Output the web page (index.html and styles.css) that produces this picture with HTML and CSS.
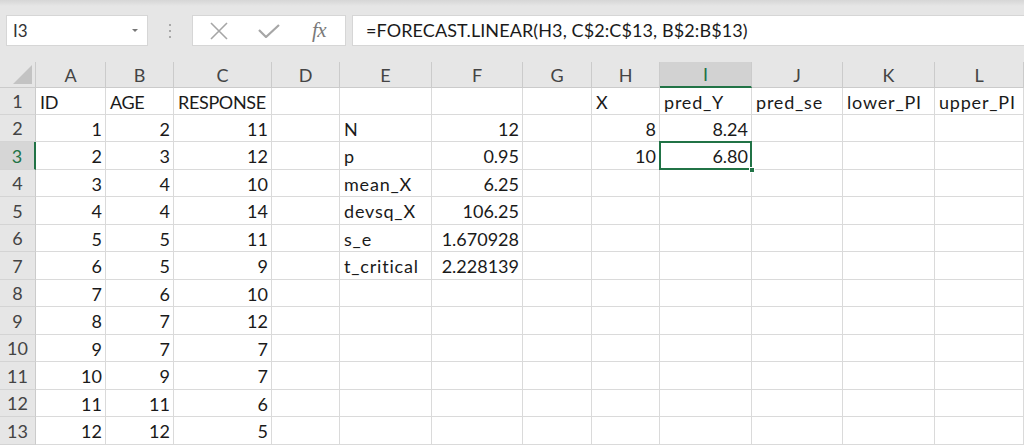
FILE: index.html
```html
<!DOCTYPE html>
<html>
<head>
<meta charset="utf-8">
<link rel="stylesheet" href="styles.css">
</head>
<body>
<div class="app">
  <div class="toolbar">
    <div class="namebox">
      <span class="name">I3</span>
      <span class="caret"></span>
    </div>
    <div class="grip"><i></i><i></i><i></i></div>
    <div class="fxbtns">
      <svg class="ico" width="20" height="18" viewBox="0 0 20 18"><path d="M2 1 L18 17 M18 1 L2 17" stroke="#a6a6a6" stroke-width="1.6" fill="none"/></svg>
      <svg class="ico" width="22" height="14" viewBox="0 0 22 14"><path d="M1 6 L8 13 L21 1" stroke="#a6a6a6" stroke-width="2.2" fill="none"/></svg>
      <span class="fx">fx</span>
    </div>
    <div class="formula">=FORECAST.LINEAR(H3, C$2:C$13, B$2:B$13)</div>
  </div>
  <div class="sheet">
    <div class="corner"><span class="tri"></span></div>
    <div class="ch">A</div><div class="ch">B</div><div class="ch">C</div><div class="ch">D</div><div class="ch">E</div><div class="ch">F</div><div class="ch">G</div><div class="ch">H</div><div class="ch sel">I</div><div class="ch">J</div><div class="ch">K</div><div class="ch">L</div>

    <div class="rh">1</div><div class="c up">ID</div><div class="c up">AGE</div><div class="c up">RESPONSE</div><div class="c"></div><div class="c"></div><div class="c"></div><div class="c"></div><div class="c">X</div><div class="c lo">pred_Y</div><div class="c lo">pred_se</div><div class="c lo">lower_PI</div><div class="c lo">upper_PI</div>

    <div class="rh">2</div><div class="c n">1</div><div class="c n">2</div><div class="c n">11</div><div class="c"></div><div class="c">N</div><div class="c n">12</div><div class="c"></div><div class="c n">8</div><div class="c n">8.24</div><div class="c"></div><div class="c"></div><div class="c"></div>

    <div class="rh sel">3</div><div class="c n">2</div><div class="c n">3</div><div class="c n">12</div><div class="c"></div><div class="c">p</div><div class="c n">0.95</div><div class="c"></div><div class="c n">10</div><div class="c n active">6.80</div><div class="c"></div><div class="c"></div><div class="c"></div>

    <div class="rh">4</div><div class="c n">3</div><div class="c n">4</div><div class="c n">10</div><div class="c"></div><div class="c lo">mean_X</div><div class="c n">6.25</div><div class="c"></div><div class="c"></div><div class="c"></div><div class="c"></div><div class="c"></div><div class="c"></div>

    <div class="rh">5</div><div class="c n">4</div><div class="c n">4</div><div class="c n">14</div><div class="c"></div><div class="c lo">devsq_X</div><div class="c n">106.25</div><div class="c"></div><div class="c"></div><div class="c"></div><div class="c"></div><div class="c"></div><div class="c"></div>

    <div class="rh">6</div><div class="c n">5</div><div class="c n">5</div><div class="c n">11</div><div class="c"></div><div class="c lo">s_e</div><div class="c n">1.670928</div><div class="c"></div><div class="c"></div><div class="c"></div><div class="c"></div><div class="c"></div><div class="c"></div>

    <div class="rh">7</div><div class="c n">6</div><div class="c n">5</div><div class="c n">9</div><div class="c"></div><div class="c lo">t_critical</div><div class="c n">2.228139</div><div class="c"></div><div class="c"></div><div class="c"></div><div class="c"></div><div class="c"></div><div class="c"></div>

    <div class="rh">8</div><div class="c n">7</div><div class="c n">6</div><div class="c n">10</div><div class="c"></div><div class="c"></div><div class="c"></div><div class="c"></div><div class="c"></div><div class="c"></div><div class="c"></div><div class="c"></div><div class="c"></div>

    <div class="rh">9</div><div class="c n">8</div><div class="c n">7</div><div class="c n">12</div><div class="c"></div><div class="c"></div><div class="c"></div><div class="c"></div><div class="c"></div><div class="c"></div><div class="c"></div><div class="c"></div><div class="c"></div>

    <div class="rh">10</div><div class="c n">9</div><div class="c n">7</div><div class="c n">7</div><div class="c"></div><div class="c"></div><div class="c"></div><div class="c"></div><div class="c"></div><div class="c"></div><div class="c"></div><div class="c"></div><div class="c"></div>

    <div class="rh">11</div><div class="c n">10</div><div class="c n">9</div><div class="c n">7</div><div class="c"></div><div class="c"></div><div class="c"></div><div class="c"></div><div class="c"></div><div class="c"></div><div class="c"></div><div class="c"></div><div class="c"></div>

    <div class="rh">12</div><div class="c n">11</div><div class="c n">11</div><div class="c n">6</div><div class="c"></div><div class="c"></div><div class="c"></div><div class="c"></div><div class="c"></div><div class="c"></div><div class="c"></div><div class="c"></div><div class="c"></div>

    <div class="rh">13</div><div class="c n">12</div><div class="c n">12</div><div class="c n">5</div><div class="c"></div><div class="c"></div><div class="c"></div><div class="c"></div><div class="c"></div><div class="c"></div><div class="c"></div><div class="c"></div><div class="c"></div>
  </div>
</div>
</body>
</html>
```

FILE: styles.css
```css
html, body {
  margin: 0;
  padding: 0;
}
body {
  width: 1024px;
  height: 445px;
  overflow: hidden;
  background: #e6e6e6;
  font-family: Lato, "Liberation Sans", sans-serif;
  color: #1a1a1a;
}
.app {
  display: flex;
  flex-direction: column;
  height: 445px;
}
.toolbar {
  height: 62px;
  box-sizing: border-box;
  padding: 15px 0 0 6px;
  display: flex;
  align-items: flex-start;
  background: linear-gradient(#d6d6d6 0px, #e6e6e6 6px, #e6e6e6 100%);
}
.namebox {
  width: 142px;
  height: 31px;
  box-sizing: border-box;
  background: #fff;
  border: 1px solid #d6d6d6;
  display: flex;
  align-items: center;
  justify-content: space-between;
  padding: 0 9px 0 6px;
}
.name {
  font-size: 17px;
  color: #333;
}
.caret {
  width: 0;
  height: 0;
  border-left: 3px solid transparent;
  border-right: 3px solid transparent;
  border-top: 3px solid #777;
}
.grip {
  width: 44px;
  height: 31px;
  display: flex;
  flex-direction: column;
  align-items: center;
  justify-content: center;
  gap: 4px;
}
.grip i {
  display: block;
  width: 2px;
  height: 2px;
  background: #a8a8a8;
}
.fxbtns {
  width: 154px;
  height: 31px;
  box-sizing: border-box;
  background: #fff;
  border: 1px solid #d6d6d6;
  display: flex;
  align-items: center;
  padding: 0 0 0 16px;
  gap: 29px;
}
.fx {
  font-family: "Liberation Serif", "DejaVu Serif", serif;
  font-style: italic;
  font-size: 21px;
  color: #7a7a7a;
  margin-left: 3px;
  letter-spacing: -0.5px;
}
.formula {
  flex: 1;
  margin-left: 6px;
  height: 31px;
  box-sizing: border-box;
  background: #fff;
  border: 1px solid #d6d6d6;
  border-right: none;
  font-size: 18px;
  line-height: 29px;
  padding-left: 13px;
  color: #1a1a1a;
  white-space: nowrap;
  letter-spacing: 0.1px;
}
.sheet {
  flex: 1;
  display: grid;
  grid-template-columns: 36px 70px 68px 98px 68px 92px 91px 69px 68px 92px 91px 92px 1fr;
  grid-template-rows: 26px 27px 27px 28px 27px 28px 27px 28px 27px 28px 27px 28px 27px 28px;
  background: #fff;
  font-size: 18px;
}
.corner {
  background: #e6e6e6;
  border-right: 1px solid #cbcbcb;
  border-bottom: 1px solid #cbcbcb;
  box-sizing: border-box;
  position: relative;
}
.tri {
  position: absolute;
  right: 3px;
  bottom: 3px;
  width: 0;
  height: 0;
  border-left: 19px solid transparent;
  border-bottom: 19px solid #c3c3c3;
}
.ch {
  background: #e6e6e6;
  border-right: 1px solid #cbcbcb;
  border-bottom: 1px solid #cbcbcb;
  box-sizing: border-box;
  display: flex;
  align-items: center;
  justify-content: center;
  color: #444;
}
.ch.sel {
  background: #d2d2d2;
  border-bottom: 2px solid #217346;
  color: #217346;
}
.rh {
  background: #e6e6e6;
  border-right: 1px solid #cbcbcb;
  border-bottom: 1px solid #d4d4d4;
  box-sizing: border-box;
  display: flex;
  align-items: center;
  justify-content: center;
  color: #444;
}
.rh.sel {
  background: #d6d6d6;
  border-right: 2px solid #217346;
  color: #217346;
}
.c {
  border-right: 1px solid #dadada;
  border-bottom: 1px solid #dadada;
  box-sizing: border-box;
  display: flex;
  align-items: center;
  padding: 1px 4px 0 4px;
  white-space: nowrap;
  overflow: visible;
}
.c.up {
  letter-spacing: -0.35px;
}
.c.lo {
  letter-spacing: 0.8px;
}
.c.n {
  justify-content: flex-end;
  padding-right: 3px;
}
.c.active {
  position: relative;
}
.c.active::before {
  content: "";
  position: absolute;
  left: -1px;
  top: -1px;
  right: -1px;
  bottom: -1px;
  border: 2px solid #217346;
}
.c.active::after {
  content: "";
  position: absolute;
  right: -4px;
  bottom: -4px;
  width: 6px;
  height: 6px;
  background: #217346;
  border: 1px solid #fff;
  box-sizing: border-box;
}
```
